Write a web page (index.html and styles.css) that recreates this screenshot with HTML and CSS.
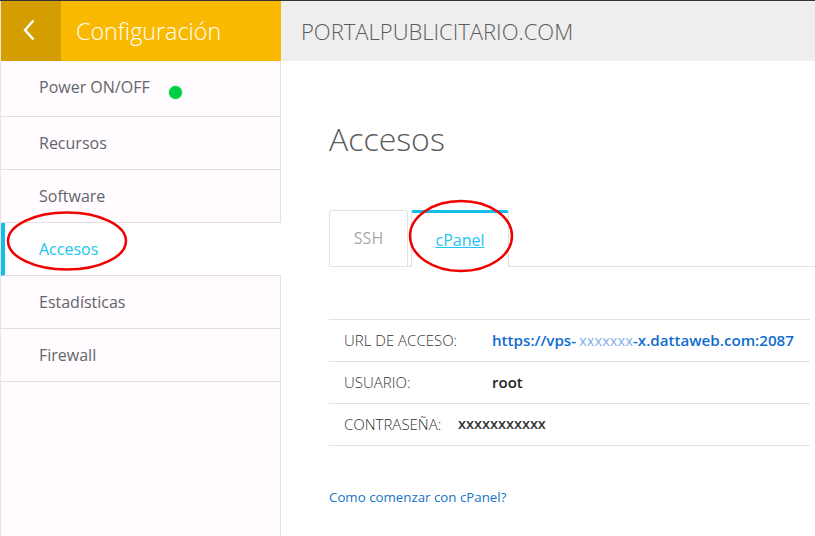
FILE: index.html
```
<!DOCTYPE html>
<html lang="es">
<head>
<meta charset="utf-8">
<title>Accesos</title>
<link rel="stylesheet" href="styles.css">
</head>
<body>
<div class="page">
  <aside class="side">
    <div class="side-head">
      <a class="back"><svg width="14" height="24" viewBox="0 0 14 24"><path d="M11.5 2.5 3 12l8.5 9.500" fill="none" stroke="#fff" stroke-width="2.4"/></svg></a>
      <h2 class="side-title">Configuración</h2>
    </div>
    <nav class="menu">
      <a class="item item-power">Power ON/OFF<span class="dot"></span></a>
      <a class="item">Recursos</a>
      <a class="item">Software</a>
      <a class="item active">Accesos</a>
      <a class="item">Estadísticas</a>
      <a class="item">Firewall</a>
    </nav>
  </aside>
  <main class="main">
    <header class="top">PORTALPUBLICITARIO.COM</header>
    <section class="content">
      <h1 class="title">Accesos</h1>
      <div class="tabs">
        <a class="tab">SSH</a>
        <a class="tab tab-on">cPanel</a>
      </div>
      <div class="table">
        <div class="row"><span class="lab">URL DE ACCESO:</span><span class="val link">https://vps-<span class="mask">xxxxxxx</span>-x.dattaweb.com:2087</span></div>
        <div class="row"><span class="lab">USUARIO:</span><span class="val">root</span></div>
        <div class="row"><span class="lab">CONTRASEÑA:</span><span class="pass">xxxxxxxxxxx</span></div>
      </div>
      <a class="help">Como comenzar con cPanel?</a>
    </section>
  </main>
  <svg class="marks" width="815" height="536" viewBox="0 0 815 536">
    <ellipse cx="67" cy="241" rx="59" ry="28.500" fill="none" stroke="#f00000" stroke-width="2.500"/>
    <ellipse cx="461" cy="236" rx="51" ry="35" fill="none" stroke="#f00000" stroke-width="2.500"/>
  </svg>
</div>
</body>
</html>
```
FILE: styles.css
```
* { box-sizing: border-box; }
html, body { margin: 0; padding: 0; }
body { background: #fff; font-family: "Open Sans", sans-serif; overflow: hidden; }
.page { position: relative; display: flex; width: 815px; height: 536px; overflow: hidden; border-top: 1px solid #333; }
.side { width: 281px; flex: none; display: flex; flex-direction: column; background: #fffbff; border-right: 1px solid #e2e0e2; border-left: 1px solid #e6e6e6; }
.side-head { display: flex; height: 60px; background: #f9b900; margin-right: -1px; }
.back { width: 60px; display: flex; align-items: center; justify-content: center; background: #d49d00; padding-right: 4px; padding-bottom: 3px; }
.side-title { margin: 0; padding-left: 15px; font-size: 23.300px; font-weight: 300; line-height: 60px; color: #fff; }
.menu { display: flex; flex-direction: column; }
.item { display: block; height: 53px; padding: 14px 0 0 38px; font-size: 16px; line-height: 24px; color: #636569; border-bottom: 1px solid #e2dfe2; }
.item-power { height: 56px; padding-top: 14px; }
.dot { display: inline-block; width: 13px; height: 13px; margin: 0 0 -6px 19px; border-radius: 50%; background: #00cc44; box-shadow: 0 0 2px #50ee60; vertical-align: baseline; }
.active { position: relative; background: #fff; color: #22c4f0; margin-right: -1px; border-left: 4px solid #13bfe8; padding-left: 34px; }
.main { flex: 1; min-width: 0; display: flex; flex-direction: column; }
.top { height: 60px; background: #eeeeee; padding-left: 20px; font-size: 22px; font-weight: 300; line-height: 60px; color: #5c5c5c; }
.content { padding: 0 5px 0 48px; }
.title { margin: 56px 0 0; font-size: 32px; font-weight: 300; line-height: 44px; color: #5a5a5a; }
.tabs { display: flex; align-items: flex-end; height: 58px; margin-top: 48px; margin-right: -5px; border-bottom: 1px solid #e2e2e2; }
.tab { width: 79px; height: 56px; text-align: center; font-size: 16px; line-height: 55px; color: #a8a8a8; border: 1px solid #e2e2e2; border-bottom: 0; border-radius: 3px 3px 0 0; }
.tab-on { width: 98px; height: 57px; margin-left: 3px; margin-bottom: -1px; color: #22c4f0; text-decoration: underline; background: #fff; border-top: 3px solid #13bfe8; }
.table { margin-top: 52px; border-top: 1px solid #e2e2e2; }
.row { display: flex; height: 42px; padding-left: 15px; align-items: center; font-size: 15px; color: #444; border-bottom: 1px solid #e2e2e2; }
.lab { width: 148px; flex: none; margin-top: -1px; font-weight: 300; color: #333; }
.val { margin-top: -2px; font-weight: 600; color: #222; }
.link { color: #0f6dd0; white-space: nowrap; font-size: 15.150px; }
.mask { color: #7fb0ea; font-weight: 400; margin-left: 3px; font-size: 14.700px; }
.pass { margin-left: -34px; margin-top: -3px; font-weight: 600; font-size: 14.500px; color: #333; }
.help { display: block; margin-top: 42px; font-size: 13.300px; line-height: 18px; color: #1573c8; }
.marks { position: absolute; left: 0; top: -1px; pointer-events: none; }
```
